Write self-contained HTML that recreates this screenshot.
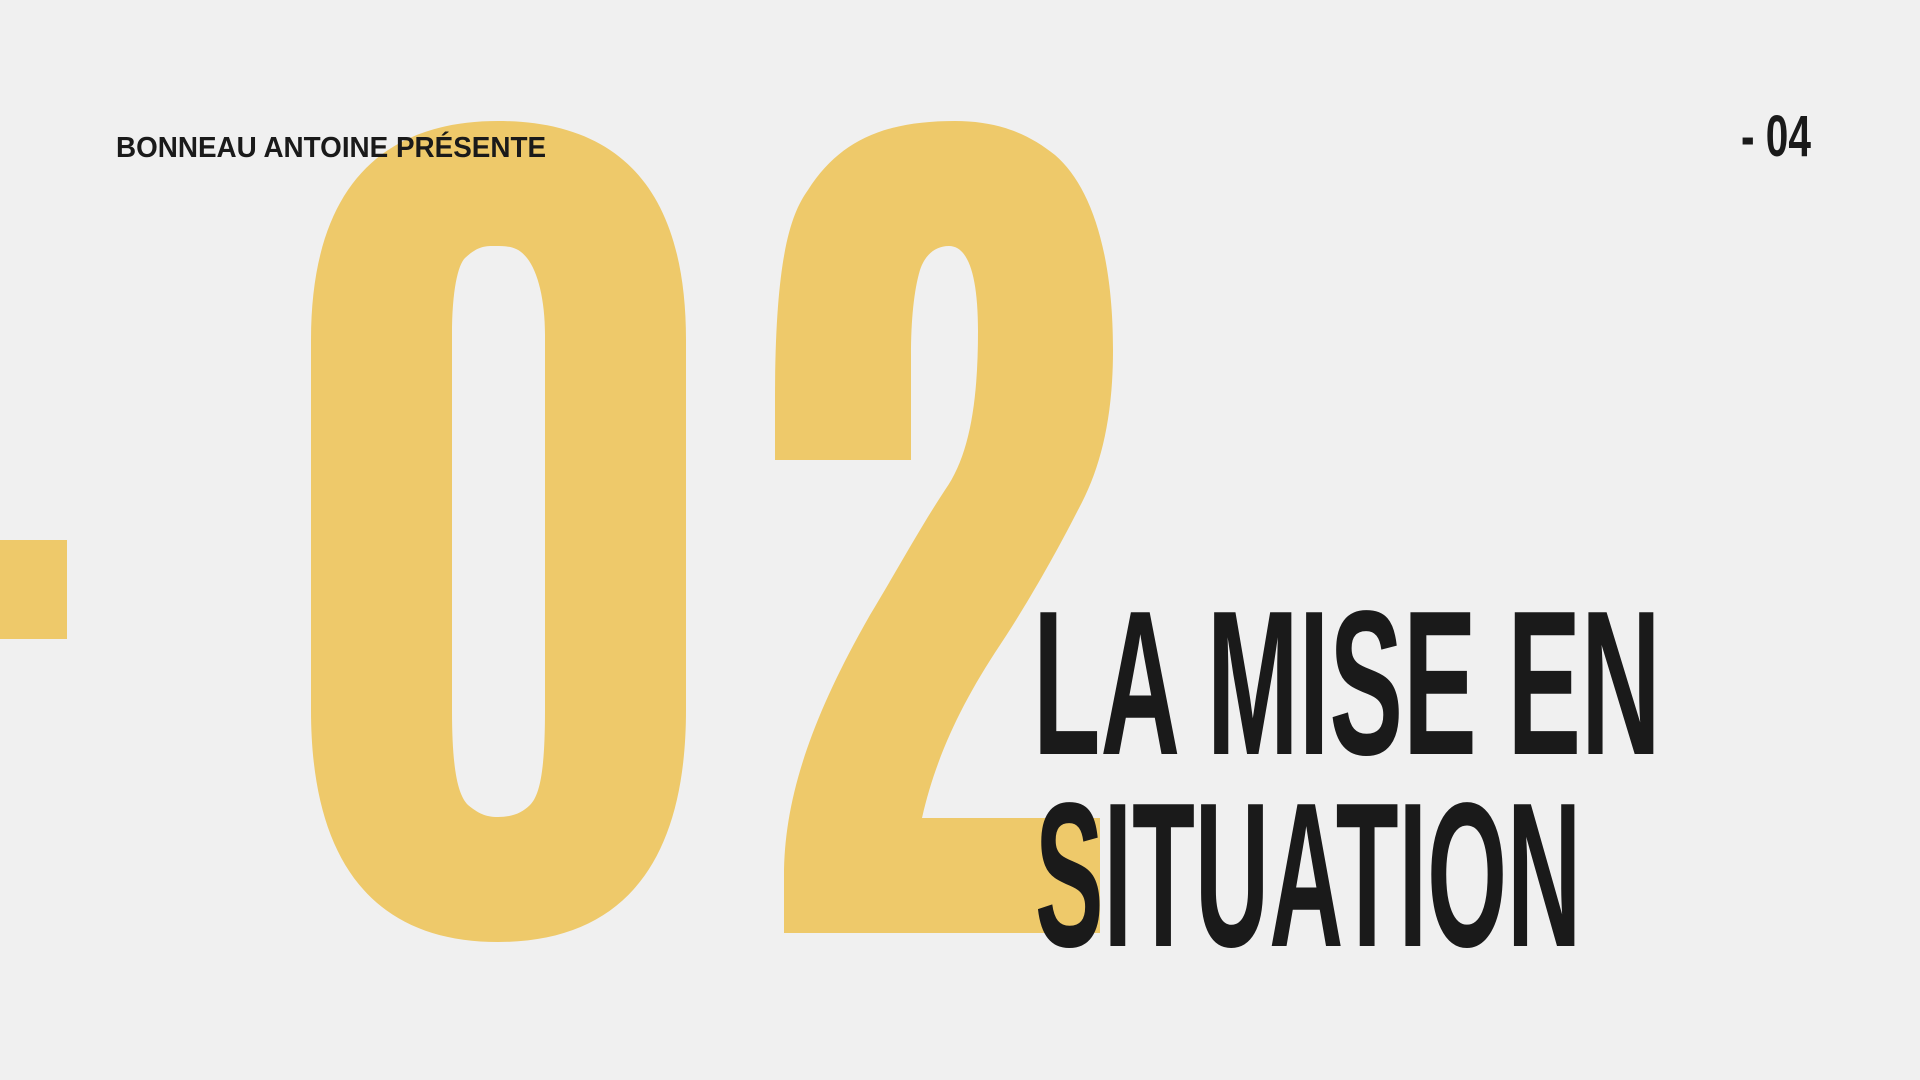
<!DOCTYPE html>
<html><head><meta charset="utf-8"><style>
html,body{margin:0;padding:0}
body{width:1920px;height:1080px;background:#f0f0f0;position:relative;overflow:hidden;font-family:"Liberation Sans",sans-serif;font-weight:bold;color:#1a1a1a}
.t{position:absolute;white-space:nowrap;line-height:1;transform-origin:0 0}
</style></head><body>
<svg width="1920" height="1080" viewBox="0 0 1920 1080" style="position:absolute;left:0;top:0">
<rect x="0" y="540" width="67" height="99" fill="#EEC96A"/>
<path fill="#EEC96A" fill-rule="evenodd" d="M311,340 C311,190 380,121 498,121 C620,121 686,190 686,340 L686,710 C686,860 625,942 498,942 C372,942 311,860 311,710 Z M452,335 C452,290 458,265 465,258 C478,246 485,246 495,246 C510,246 518,247 527,258 C538,272 545,300 545,335 L545,710 C545,770 540,795 530,805 C522,813 512,817 498,817 C485,817 478,813 468,805 C458,795 452,770 452,710 Z"/>
<path fill="#EEC96A" d="M775,460 L775,400 C775,260 790,215 808,190 C840,140 885,121 955,121 C1000,121 1030,135 1055,155 C1090,185 1113,250 1113,350 C1113,420 1100,470 1078,510 C1050,565 1020,615 1000,645 C960,705 935,760 922,818 L1100,818 L1100,933 L784,933 L784,876 C784,800 810,720 870,615 C900,565 920,528 945,490 C970,455 978,400 978,331 C978,275 968,246 949,246 C935,246 925,255 920,270 C914,290 911,320 911,355 L911,460 Z"/>
</svg>
<div class="t" style="left:116px;top:134px;font-size:29px;transform:scaleX(0.96)">BONNEAU ANTOINE PRÉSENTE</div>
<div class="t" style="left:1741px;top:108px;font-size:58px;transform:scaleX(0.7)">- 04</div>
<div class="t" style="left:1033px;top:580px;font-size:206px;transform:scaleX(0.536)">LA MISE EN</div>
<div class="t" style="left:1035px;top:772px;font-size:206px;transform:scaleX(0.499)">SITUATION</div>
</body></html>
